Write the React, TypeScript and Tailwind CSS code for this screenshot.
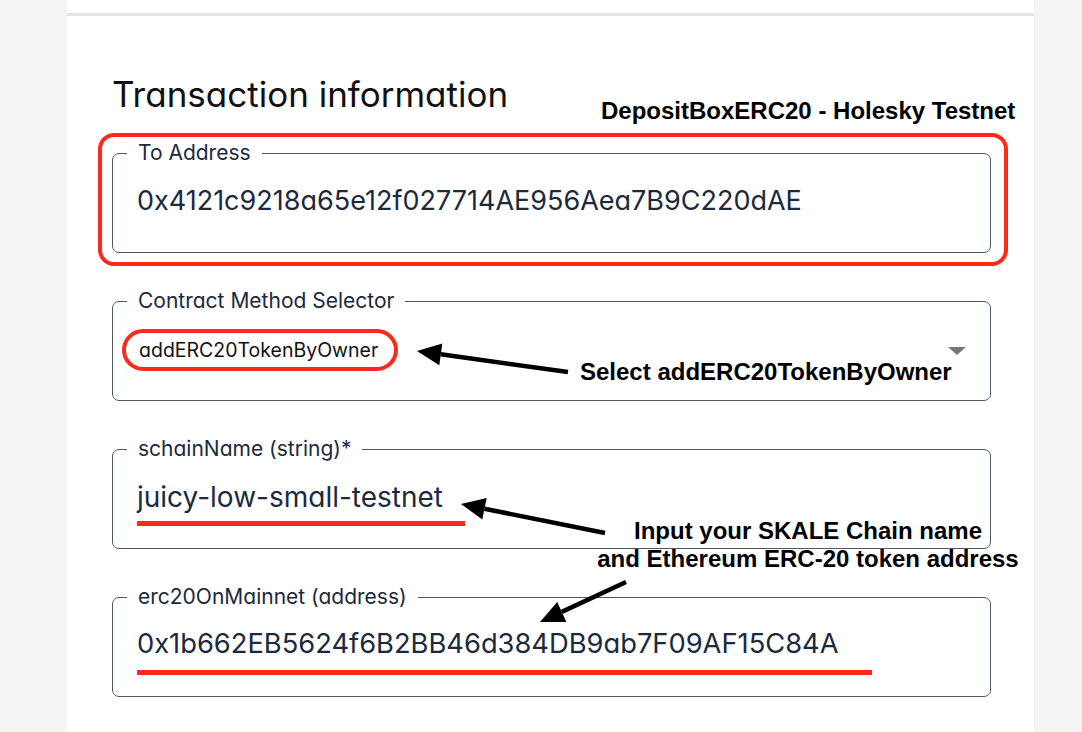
import React from "react";

function Field({ label, children }: { label: string; children?: React.ReactNode }) {
  return (
    <fieldset className="h-[112px] w-[879px] rounded-[7px] border border-[#4f5966] p-0 m-0 min-w-0">
      <legend className="ml-[14px] px-[11px] text-[21px] leading-[24px] text-[#1b2a3e] font-['Inter',sans-serif] [font-feature-settings:'cv11']">
        {label}
      </legend>
      {children}
    </fieldset>
  );
}

export default function App() {
  return (
    <div className="relative w-[1082px] h-[732px] overflow-hidden bg-[#f4f4f4] flex font-['Inter',sans-serif] [font-feature-settings:'cv11']">
      <div className="ml-[67px] w-[967px] h-full bg-white flex flex-col">
        <div className="mt-[13px] border-t-[3px] border-[#e4e4e4]" />
        <h1 className="mt-[58px] ml-[45px] text-[35px] leading-[40px] text-[#111111] font-normal">
          Transaction information
        </h1>
        <div className="mt-[27px] ml-[45px] flex flex-col gap-[36px]">
          <div className="-ml-[14px] -mr-[17px] -mt-[8px] -mb-[13px] w-[910px] rounded-[16px] border-4 border-[#fc2a1c] pt-[4px] pb-[9px] pl-[10px]">
            <Field label="To Address">
              <div className="pl-[24px] pt-[19px] text-[27px] leading-[34px] text-[#1b2a3e]">
                0x4121c9218a65e12f027714AE956Aea7B9C220dAE
              </div>
            </Field>
          </div>
          <Field label="Contract Method Selector">
            <div className="flex items-center pt-[16px] pl-[9px] pr-[24px]">
              <div className="rounded-full border-4 border-[#fc2a1c] pl-[13px] pr-[16px] text-[19.5px] leading-[34px] text-[#111111]">
                addERC20TokenByOwner
              </div>
              <div className="ml-auto mt-[2px] h-0 w-0 border-l-[9px] border-r-[9px] border-t-[8px] border-l-transparent border-r-transparent border-t-[#767676]" />
            </div>
          </Field>
          <Field label="schainName (string)*">
            <div className="pl-[24px] pt-[19px]">
              <div className="text-[28px] leading-[34px] text-[#1b2a3e]">juicy-low-small-testnet</div>
              <div className="mt-[7px] h-[5px] w-[328px] bg-[#fc2a1c]" />
            </div>
          </Field>
          <Field label="erc20OnMainnet (address)">
            <div className="pl-[24px] pt-[18px]">
              <div className="text-[27.3px] leading-[34px] text-[#1b2a3e]">0x1b662EB5624f6B2BB46d384DB9ab7F09AF15C84A</div>
              <div className="mt-[9px] h-[5px] w-[735px] bg-[#fc2a1c]" />
            </div>
          </Field>
        </div>
      </div>

      <div className="absolute left-[601px] top-[99px] whitespace-nowrap font-['Liberation_Sans',Arial,sans-serif] font-bold text-[24px] leading-[24px] text-black">
        DepositBoxERC20 - Holesky Testnet
      </div>
      <div className="absolute left-[580px] top-[360px] whitespace-nowrap font-['Liberation_Sans',Arial,sans-serif] font-bold text-[24px] leading-[24px] text-black">
        Select addERC20TokenByOwner
      </div>
      <div className="absolute left-[588px] top-[517px] w-[440px] text-center whitespace-nowrap font-['Liberation_Sans',Arial,sans-serif] font-bold text-[24px] leading-[28px] text-black">
        <div>Input your SKALE Chain name</div>
        <div>and Ethereum ERC-20 token address</div>
      </div>

      <svg className="absolute left-0 top-0 pointer-events-none" width="1082" height="732" viewBox="0 0 1082 732">
        <line x1="568" y1="372" x2="440.8" y2="354.3" stroke="#000" strokeWidth="4.5" />
        <polygon points="417,351 442.3,343.4 439.3,365.2" fill="#000" />
        <line x1="605" y1="533" x2="484.5" y2="508.7" stroke="#000" strokeWidth="4.5" />
        <polygon points="461,504 486.7,497.9 482.3,519.5" fill="#000" />
        <line x1="626" y1="582" x2="561.8" y2="611.9" stroke="#000" strokeWidth="4.5" />
        <polygon points="540,622 566.4,621.9 557.2,601.9" fill="#000" />
      </svg>
    </div>
  );
}
